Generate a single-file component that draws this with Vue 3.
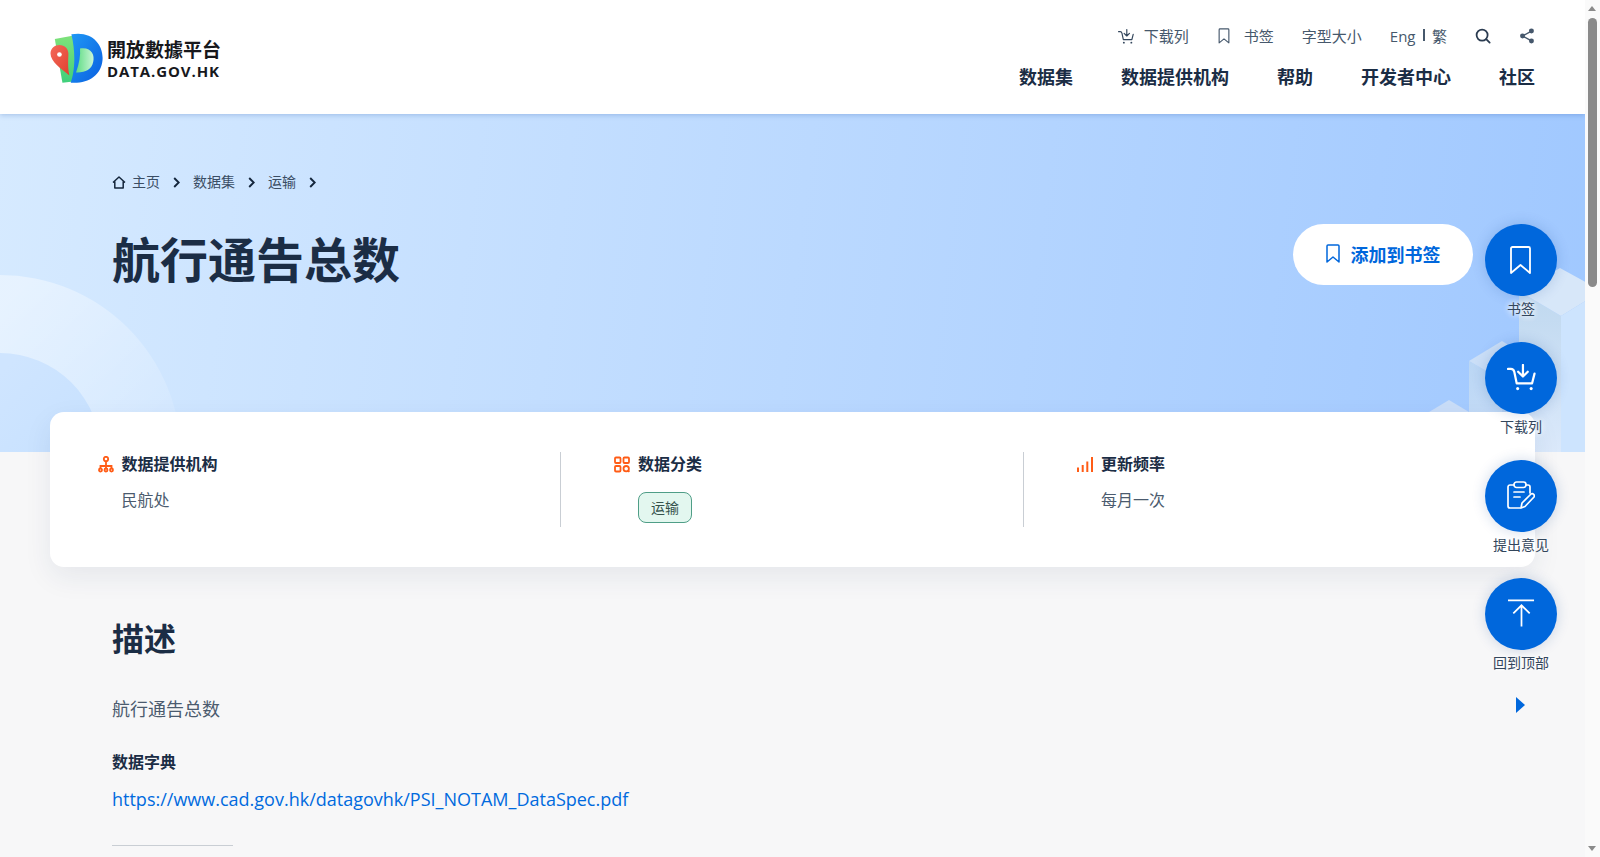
<template>
  <div class="page">
    <div class="main">
      <header class="header">
        <a class="logo">
          <svg class="logo-mark" viewBox="60 45 165 160" aria-hidden="true">
            <defs>
              <linearGradient id="lg-green" x1="0" y1="0" x2="0" y2="1"><stop offset="0" stop-color="#7fe27a"/><stop offset="1" stop-color="#3fd07c"/></linearGradient>
              <linearGradient id="lg-blue" x1="0" y1="0" x2="1" y2="1"><stop offset="0" stop-color="#1f98f5"/><stop offset="1" stop-color="#0a5fe0"/></linearGradient>
              <linearGradient id="lg-inner" x1="0" y1="0" x2="1" y2="0"><stop offset="0" stop-color="#5fdc84"/><stop offset="1" stop-color="#c9f6d6"/></linearGradient>
              <linearGradient id="lg-red" x1="0" y1="0" x2="1" y2="1"><stop offset="0" stop-color="#f4695a"/><stop offset="1" stop-color="#e0402f"/></linearGradient>
            </defs>
            <path d="M74 66 L135 55 L170 190 L97 198 Z" fill="url(#lg-green)"/>
            <path d="M124 52 C188 40 222 85 218 130 C214 175 175 202 122 198 C134 165 138 110 124 52Z" fill="url(#lg-blue)"/>
            <path d="M150 95 C185 90 195 115 190 135 C185 160 165 168 138 167 C148 140 152 115 150 95Z" fill="url(#lg-inner)"/>
            <path d="M61 110 C61 94 74 84 88 84 C104 84 115 96 115 110 C115 125 112 150 118 176 C95 158 61 135 61 110Z" fill="url(#lg-red)"/>
            <circle cx="88" cy="113" r="7" fill="#fff"/>
          </svg>
          <span class="logo-text">
            <span class="logo-cn">開放數據平台</span>
            <span class="logo-en">DATA.GOV.HK</span>
          </span>
        </a>
        <div class="header-right">
          <div class="util">
            <span class="util-item">
              <svg class="i-cart-s" viewBox="0 0 30 28" aria-hidden="true"><path d="M1 5h3c2 0 3 1 3.500 3L10 20h16l2.500-10M16.500 1v11M11.500 8l5 5 5-5" fill="none" stroke="currentColor" stroke-width="2.200" stroke-linecap="round" stroke-linejoin="round"/><circle cx="11" cy="25.500" r="1.800" fill="currentColor"/><circle cx="25" cy="25.500" r="1.800" fill="currentColor"/></svg>
              下载列
            </span>
            <span class="util-item">
              <svg class="i-mark-s" viewBox="0 0 21 28" aria-hidden="true"><path d="M2 3a1.500 1.500 0 0 1 1.500-1.500h14A1.500 1.500 0 0 1 19 3v23l-8.500-7L2 26Z" fill="none" stroke="currentColor" stroke-width="2" stroke-linejoin="round"/></svg>
              书签
            </span>
            <span class="util-item">字型大小</span>
            <span class="lang"><span class="eng">Eng</span><i class="lang-bar"></i><span>繁</span></span>
            <svg class="i-search" viewBox="0 0 18 18" aria-hidden="true"><circle cx="8" cy="8" r="6.200" fill="none" stroke="currentColor" stroke-width="2"/><path d="M12.600 12.600 16.500 16.500" stroke="currentColor" stroke-width="2" stroke-linecap="round"/></svg>
            <svg class="i-share" viewBox="0 0 18 18" aria-hidden="true"><path d="M14 3.500 4 9l10 5.500" fill="none" stroke="currentColor" stroke-width="1.600"/><circle cx="14" cy="3.500" r="2.800" fill="currentColor"/><circle cx="4" cy="9" r="2.800" fill="currentColor"/><circle cx="14" cy="14.500" r="2.800" fill="currentColor"/></svg>
          </div>
          <nav class="nav">
            <a>数据集</a><a>数据提供机构</a><a>帮助</a><a>开发者中心</a><a>社区</a>
          </nav>
        </div>
      </header>

      <section class="hero">
        <svg class="hero-art" viewBox="1385 114 200 338" aria-hidden="true">
          <defs>
            <linearGradient id="face-left" x1="0" y1="0" x2="0" y2="1"><stop offset="0" stop-color="#bfd8ef"/><stop offset="1" stop-color="#dbe9fb"/></linearGradient>
            <linearGradient id="face-small" x1="0" y1="0" x2="0" y2="1"><stop offset="0" stop-color="#bad6f4"/><stop offset="1" stop-color="#c9def8"/></linearGradient>
          </defs>
          <polygon points="1429,412 1449,400 1469,412" fill="#c9ddf8"/>
          <polygon points="1469,361 1502,380 1502,452 1469,452" fill="url(#face-small)"/>
          <polygon points="1502,380 1535,361 1535,452 1502,452" fill="#b7d3f2"/>
          <polygon points="1469,361 1502,341 1535,361 1502,380" fill="#cbdff7"/>
          <polygon points="1519,291 1561,316 1561,452 1519,452" fill="url(#face-left)"/>
          <polygon points="1561,316 1602,291 1602,452 1561,452" fill="#cde4fe"/>
          <polygon points="1519,291 1560,268 1602,291 1561,316" fill="#d7e7f9"/>
        </svg>
        <i class="arc arc-outer"></i>
        <i class="arc arc-inner"></i>
        <div class="crumbs">
          <svg class="i-home" viewBox="0 0 14 13" aria-hidden="true"><path d="M1 6.500 7 1l6 5.500M2.800 5.500V12h8.400V5.500" fill="none" stroke="currentColor" stroke-width="1.500" stroke-linejoin="round"/></svg>
          <span class="crumb-first">主页</span>
          <svg class="i-chev" viewBox="0 0 7 11" aria-hidden="true"><path d="M1.200 1 5.700 5.500 1.200 10" fill="none" stroke="currentColor" stroke-width="1.900"/></svg>
          <span>数据集</span>
          <svg class="i-chev" viewBox="0 0 7 11" aria-hidden="true"><path d="M1.200 1 5.700 5.500 1.200 10" fill="none" stroke="currentColor" stroke-width="1.900"/></svg>
          <span>运输</span>
          <svg class="i-chev" viewBox="0 0 7 11" aria-hidden="true"><path d="M1.200 1 5.700 5.500 1.200 10" fill="none" stroke="currentColor" stroke-width="1.900"/></svg>
        </div>
        <div class="title-row">
          <h1>航行通告总数</h1>
          <button class="add-btn">
            <svg viewBox="0 0 14 19" aria-hidden="true"><path d="M1 2a1 1 0 0 1 1-1h10a1 1 0 0 1 1 1v16l-6-5-6 5Z" fill="none" stroke="currentColor" stroke-width="1.500" stroke-linejoin="round"/></svg>
            添加到书签
          </button>
        </div>
      </section>

      <section class="card">
        <div class="col">
          <h3>
            <svg class="i-o" viewBox="0 0 16 17" aria-hidden="true"><g fill="none" stroke="#ff5c16" stroke-width="1.800"><circle cx="8" cy="3" r="2.200"/><path d="M8 5.200V10M2.500 12.500V10h11v2.500M8 10v2.500"/><circle cx="2.500" cy="14" r="1.500"/><circle cx="8" cy="14" r="1.500"/><circle cx="13.500" cy="14" r="1.500"/></g></svg>
            数据提供机构
          </h3>
          <p>民航处</p>
        </div>
        <div class="col col-line">
          <h3>
            <svg class="i-o" viewBox="0 0 16 16" aria-hidden="true"><g fill="none" stroke="#ff5c16" stroke-width="1.800"><rect x="1" y="1" width="5.500" height="5.500" rx="1"/><rect x="9.500" y="1" width="5.500" height="5.500" rx="1"/><rect x="1" y="9.500" width="5.500" height="5.500" rx="1"/><circle cx="12.200" cy="12.200" r="2.700"/><path d="m14 14 1.400 1.400"/></g></svg>
            数据分类
          </h3>
          <span class="tag">运输</span>
        </div>
        <div class="col col-line">
          <h3>
            <svg class="i-o" viewBox="0 0 16 16" aria-hidden="true"><g fill="#ff5c16"><rect x="0" y="11" width="2" height="4.500"/><rect x="4.700" y="8.500" width="2" height="7"/><rect x="9.300" y="5" width="2" height="10.500"/><rect x="14" y="0.500" width="2" height="15"/></g></svg>
            更新频率
          </h3>
          <p>每月一次</p>
        </div>
      </section>

      <section class="desc">
        <h2>描述</h2>
        <p class="desc-text">航行通告总数</p>
        <h4>数据字典</h4>
        <a class="link">https://www.cad.gov.hk/datagovhk/PSI_NOTAM_DataSpec.pdf</a>
        <hr />
      </section>

      <aside class="fabs">
        <div class="fab-item">
          <span class="fab"><svg class="f-mark" viewBox="0 0 21 28" aria-hidden="true"><path d="M1 2.500A1.500 1.500 0 0 1 2.500 1h16A1.500 1.500 0 0 1 20 2.500V27l-9.500-8L1 27Z" fill="none" stroke="#fff" stroke-width="1.800" stroke-linejoin="round"/></svg></span>
          <span class="fab-label">书签</span>
        </div>
        <div class="fab-item">
          <span class="fab"><svg class="f-cart" viewBox="0 0 30 28" aria-hidden="true"><path d="M1 5h3c2 0 3 1 3.500 3L10 20h16l2.500-10M16.500 1v11M11.500 8l5 5 5-5" fill="none" stroke="#fff" stroke-width="2.300" stroke-linecap="round" stroke-linejoin="round"/><circle cx="11" cy="25.500" r="1.600" fill="#fff"/><circle cx="25" cy="25.500" r="1.600" fill="#fff"/></svg></span>
          <span class="fab-label">下载列</span>
        </div>
        <div class="fab-item">
          <span class="fab"><svg class="f-clip" viewBox="0 0 28 28" aria-hidden="true"><g fill="none" stroke="#fff" stroke-width="1.700" stroke-linecap="round" stroke-linejoin="round"><path d="M7 4H3a2 2 0 0 0-2 2v19a2 2 0 0 0 2 2h10M19 4h2a2 2 0 0 1 2 2v6"/><rect x="7" y="1" width="12" height="5.500" rx="2.500"/><path d="M7 11h10M7 16h6"/><path d="M14 27l1-5 9-9a2.200 2.200 0 0 1 3 3l-9 9.500Z"/></g></svg></span>
          <span class="fab-label">提出意见</span>
        </div>
        <div class="fab-item">
          <span class="fab"><svg class="f-top" viewBox="0 0 28 28" aria-hidden="true"><path d="M0 1h27M14 6.500V28M5.500 14.500 14 6l8.500 8.500" fill="none" stroke="#fff" stroke-width="1.800"/></svg></span>
          <span class="fab-label">回到顶部</span>
        </div>
        <i class="fab-toggle"></i>
      </aside>
    </div>

    <div class="scrollbar" aria-hidden="true">
      <i class="arrow-up"></i>
      <i class="thumb"></i>
      <i class="arrow-down"></i>
    </div>
  </div>
</template>

<script setup>
</script>

<style>
html, body { margin: 0; height: 857px; overflow: hidden; background: #f7f7f8; }
</style>

<style scoped>
.page {
  display: flex;
  width: 1600px;
  height: 857px;
  overflow: hidden;
  font-family: "Open Sans", "Noto Sans CJK SC", sans-serif;
  color: #1b2d45;
}
.main {
  position: relative;
  flex: 0 0 1585px;
  background: #f7f7f8;
  overflow: hidden;
}
.header {
  position: relative;
  z-index: 3;
  display: flex;
  justify-content: space-between;
  height: 114px;
  padding: 0 50px;
  box-sizing: border-box;
  background: #fff;
  box-shadow: 0 1px 5px rgba(20, 70, 160, .25);
}
.logo { display: flex; align-items: center; gap: 2px; height: 114px; margin-top: 1px; }
.logo-mark { width: 55px; height: 53px; display: block; }
.logo-text { display: flex; flex-direction: column; margin-top: 2px; }
.logo-cn {
  font: 700 19px/24px "Noto Sans CJK TC", sans-serif;
  color: #17181c;
  white-space: nowrap;
}
.logo-en {
  font: 700 15px/20px "Open Sans", sans-serif;
  letter-spacing: .9px;
  color: #17181c;
  white-space: nowrap;
}
.header-right { display: flex; flex-direction: column; align-items: flex-end; padding-top: 24px; }
.util {
  display: flex;
  align-items: center;
  gap: 28px;
  height: 24px;
  font-size: 15px;
  line-height: 24px;
  color: #46586c;
}
.util-item { display: flex; align-items: center; }
.util-item:first-child { margin-right: 1px; }
.i-cart-s { width: 16px; height: 15px; margin-right: 10px; color: #33465c; }
.i-mark-s { width: 12px; height: 16px; margin-right: 14px; color: #46586c; }
.lang { display: flex; align-items: center; }
.eng { font-size: 15px; }
.lang-bar { width: 1.500px; height: 12px; background: #46586c; margin: 0 7px 2px 8px; }
.i-search { width: 16px; height: 16px; color: #2a3b50; }
.i-share { width: 16px; height: 16px; color: #46586c; }
.nav {
  display: flex;
  gap: 48px;
  margin-top: 15px;
  font-size: 18px;
  font-weight: 700;
  line-height: 28px;
  color: #1b2d45;
}
.hero {
  position: relative;
  height: 338px;
  box-sizing: border-box;
  padding: 58px 112px 0;
  background: linear-gradient(97deg, #d6eaff 0%, #a0c8ff 100%);
  overflow: hidden;
}
.hero-art { position: absolute; right: 0; top: 0; width: 200px; height: 338px; }
.arc { position: absolute; border-radius: 50%; }
.arc-outer {
  left: -181px; top: 161px; width: 362px; height: 362px;
  background: linear-gradient(135deg, rgba(255,255,255,.42) 30%, rgba(255,255,255,.06) 75%);
}
.arc-inner {
  left: -101px; top: 239px; width: 202px; height: 202px;
  background: linear-gradient(135deg, #cfe5ff 30%, #c5e0ff 80%);
}
.crumbs {
  position: relative;
  display: flex;
  align-items: center;
  gap: 13px;
  height: 20px;
  font-size: 14px;
  line-height: 20px;
  color: #3a4d64;
}
.i-home { width: 14px; height: 13px; margin-right: -7px; color: #14263c; }
.i-chev { width: 7px; height: 11px; color: #14263c; }
.title-row {
  position: relative;
  display: flex;
  justify-content: space-between;
  align-items: flex-start;
  margin-top: 32px;
}
h1 {
  margin: 0;
  font-size: 48px;
  font-weight: 700;
  line-height: 72px;
  color: #1b2d45;
}
.add-btn {
  display: flex;
  align-items: center;
  justify-content: center;
  gap: 11px;
  width: 180px;
  height: 61px;
  padding: 0;
  border: 0;
  border-radius: 31px;
  background: #fff;
  color: #0067dc;
  font: 700 18px/28px "Open Sans", "Noto Sans CJK SC", sans-serif;
}
.add-btn svg { width: 14px; height: 19px; margin-top: -2px; }
.card {
  position: relative;
  z-index: 2;
  display: grid;
  grid-template-columns: repeat(3, 463px);
  margin: -40px 50px 0;
  padding: 40px 48px;
  background: #fff;
  border-radius: 14px;
  box-shadow: 0 10px 28px rgba(30, 50, 90, .08);
}
.col { height: 75px; box-sizing: border-box; padding-left: 23.500px; }
.col-line { margin-left: -1px; border-left: 1px solid #c9ced4; padding-left: 77px; }
.col h3 {
  position: relative;
  margin: 0;
  font-size: 16px;
  font-weight: 700;
  line-height: 24px;
  color: #1b2d45;
}
.i-o { position: absolute; left: -24px; top: 4px; width: 16px; height: 17px; }
.col p {
  margin: 12px 0 0;
  font-size: 16px;
  line-height: 25px;
  color: #4b5b6e;
}
.tag {
  display: block;
  width: 54px;
  height: 31px;
  box-sizing: border-box;
  margin-top: 16px;
  border: 1px solid #4f9e87;
  border-radius: 8px;
  background: #e3f7ef;
  font-size: 14px;
  line-height: 29px;
  text-align: center;
  color: #35524c;
}
.desc { padding: 48px 112px 0; }
h2 { margin: 0; font-size: 32px; font-weight: 700; line-height: 48px; color: #1b2d45; }
.desc-text { margin: 32px 0 0; font-size: 18px; line-height: 28px; color: #4b5b6e; }
h4 { margin: 27px 0 0; font-size: 16px; font-weight: 700; line-height: 24px; color: #1b2d45; }
.link { display: block; margin-top: 11px; font-size: 18px; line-height: 28px; color: #006ade; }
hr { width: 121px; height: 1px; margin: 32px 0 0; border: 0; background: #c9ced4; }
.fabs {
  position: absolute;
  z-index: 4;
  right: 28px;
  top: 224px;
  display: flex;
  flex-direction: column;
  align-items: center;
  gap: 22px;
  width: 72px;
}
.fab-item { display: flex; flex-direction: column; align-items: center; height: 96px; }
.fab {
  display: flex;
  align-items: center;
  justify-content: center;
  flex: 0 0 72px;
  width: 72px;
  height: 72px;
  border-radius: 50%;
  background: #0067dc;
  box-shadow: 0 0 14px rgba(20, 70, 150, .2);
}
.fab-label {
  margin-top: 3px;
  font-size: 14px;
  line-height: 20px;
  white-space: nowrap;
  color: #33465c;
  text-shadow: 0 0 6px #fff, 0 0 6px #fff;
}
.f-mark { width: 21px; height: 28px; margin-left: -1px; }
.f-cart { width: 29px; height: 27px; margin-top: -2px; }
.f-clip { width: 28px; height: 28px; margin-top: -2px; }
.f-top { width: 27px; height: 28px; margin-top: -2px; }
.fab-toggle {
  width: 0;
  height: 0;
  margin-top: 1px;
  margin-left: -1px;
  border-left: 9px solid #0067dc;
  border-top: 8.500px solid transparent;
  border-bottom: 8.500px solid transparent;
}
.scrollbar {
  position: relative;
  flex: 0 0 15px;
  background: #fafafa;
}
.arrow-up, .arrow-down {
  position: absolute;
  left: 3px;
  width: 0;
  height: 0;
  border-left: 4.500px solid transparent;
  border-right: 4.500px solid transparent;
}
.arrow-up { top: 6px; border-bottom: 5px solid #8a8a8a; }
.arrow-down { bottom: 6px; border-top: 5px solid #8a8a8a; }
.thumb {
  position: absolute;
  left: 3px;
  top: 18px;
  width: 9px;
  height: 269px;
  border-radius: 5px;
  background: #8a8a8a;
}
</style>
